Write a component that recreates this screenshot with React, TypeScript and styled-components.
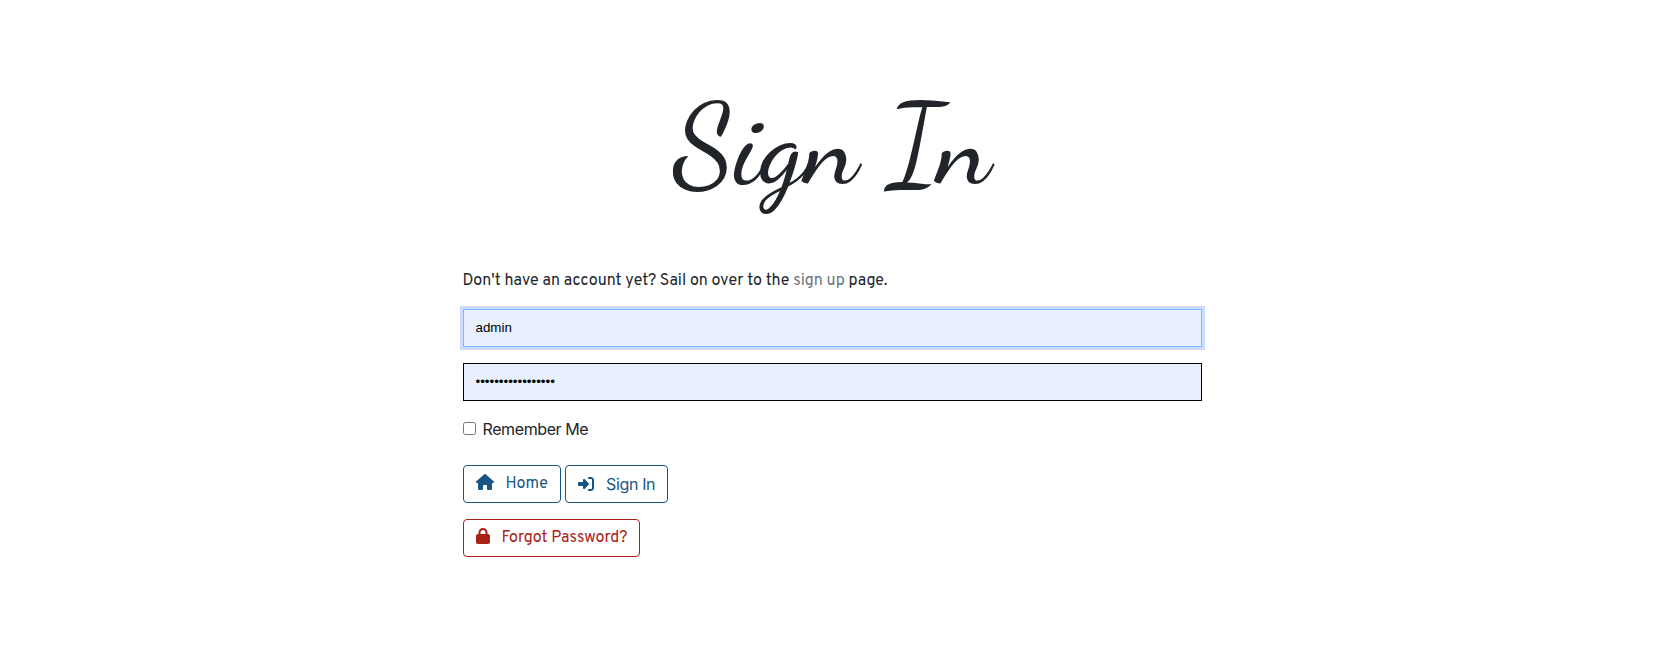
import React from "react";
import styled, { createGlobalStyle } from "styled-components";
import { FaHouse, FaLock, FaRightToBracket } from "react-icons/fa6";

const GlobalStyle = createGlobalStyle`
  *, *::before, *::after { box-sizing: border-box; }
  body {
    margin: 0;
    background: #fff;
    color: #212529;
    font: 400 16px/24px Overpass, Roboto, sans-serif;
  }
`;

const Page = styled.main`
  width: 739px;
  margin-left: 463px;
  padding-top: 78px;
`;

const Title = styled.h1`
  margin: 0 0 55px -1px;
  height: 136px;
  font: 500 112px/136px "Dancing Script", cursive;
  text-align: center;
  white-space: nowrap;
`;

const Intro = styled.p`
  margin: 0 0 16px -0.4px;
`;

const SignUpLink = styled.a`
  color: #6c757d;
  text-decoration: none;
`;

const Form = styled.form`
  display: flex;
  flex-direction: column;
  align-items: flex-start;
  gap: 16px;
`;

const Field = styled.input<{ $active?: boolean }>`
  width: 100%;
  height: 38px;
  padding: 0 11.5px 2px;
  border: 1px solid ${(p) => (p.$active ? "#7cb8fb" : "#000")};
  border-radius: 0;
  outline: none;
  background: #e8effd;
  box-shadow: ${(p) => (p.$active ? "0 0 0 3px #cbdcfe" : "none")};
  color: #000;
  font: 13.333px "Liberation Sans", Arial, sans-serif;
`;

const Remember = styled.label`
  display: flex;
  align-items: center;
  gap: 6.5px;
  height: 24px;
  margin-bottom: 8px;
  font-family: Inter, sans-serif;
  letter-spacing: -0.4px;
`;

const Checkbox = styled.input`
  width: 13px;
  height: 13px;
  margin: -2px 0 0;
`;

const Actions = styled.div`
  display: flex;
  gap: 4px;
`;

const Button = styled.button<{ $tone: string; $width: number; $gap: number; $plain?: boolean }>`
  display: flex;
  align-items: center;
  gap: ${(p) => p.$gap}px;
  width: ${(p) => p.$width}px;
  height: 38px;
  padding: 0 0 ${(p) => (p.$plain ? 0 : 1)}px 12px;
  border: 1px solid ${(p) => p.$tone};
  border-radius: 4px;
  background: #fff;
  color: ${(p) => p.$tone};
  font: inherit;
  font-family: ${(p) => (p.$plain ? "Inter, sans-serif" : "inherit")};
  letter-spacing: ${(p) => (p.$plain ? "-0.35px" : "normal")};
  white-space: nowrap;

  svg {
    flex: none;
    margin-top: ${(p) => (p.$plain ? 0 : -3)}px;
  }
`;

const LockIcon = styled(FaLock)`
  width: 14px;
  height: 16px;
`;

export default function App() {
  return (
    <>
      <GlobalStyle />
      <Page>
        <Title>Sign In</Title>
        <Intro>
          Don't have an account yet? Sail on over to the <SignUpLink href="#">sign up</SignUpLink> page.
        </Intro>
        <Form onSubmit={(e) => e.preventDefault()}>
          <Field $active type="text" defaultValue="admin" aria-label="Username" />
          <Field type="password" defaultValue="aaaaaaaaaaaaaaaaa" aria-label="Password" />
          <Remember>
            <Checkbox type="checkbox" />
            Remember Me
          </Remember>
          <Actions>
            <Button type="button" $tone="#175587" $width={98} $gap={11.4}>
              <FaHouse size={18} />
              Home
            </Button>
            <Button type="submit" $tone="#175587" $width={103} $gap={12} $plain>
              <FaRightToBracket size={16} />
              Sign In
            </Button>
          </Actions>
          <Button type="button" $tone="#ac2116" $width={177} $gap={11.4}>
            <LockIcon />
            Forgot Password?
          </Button>
        </Form>
      </Page>
    </>
  );
}
